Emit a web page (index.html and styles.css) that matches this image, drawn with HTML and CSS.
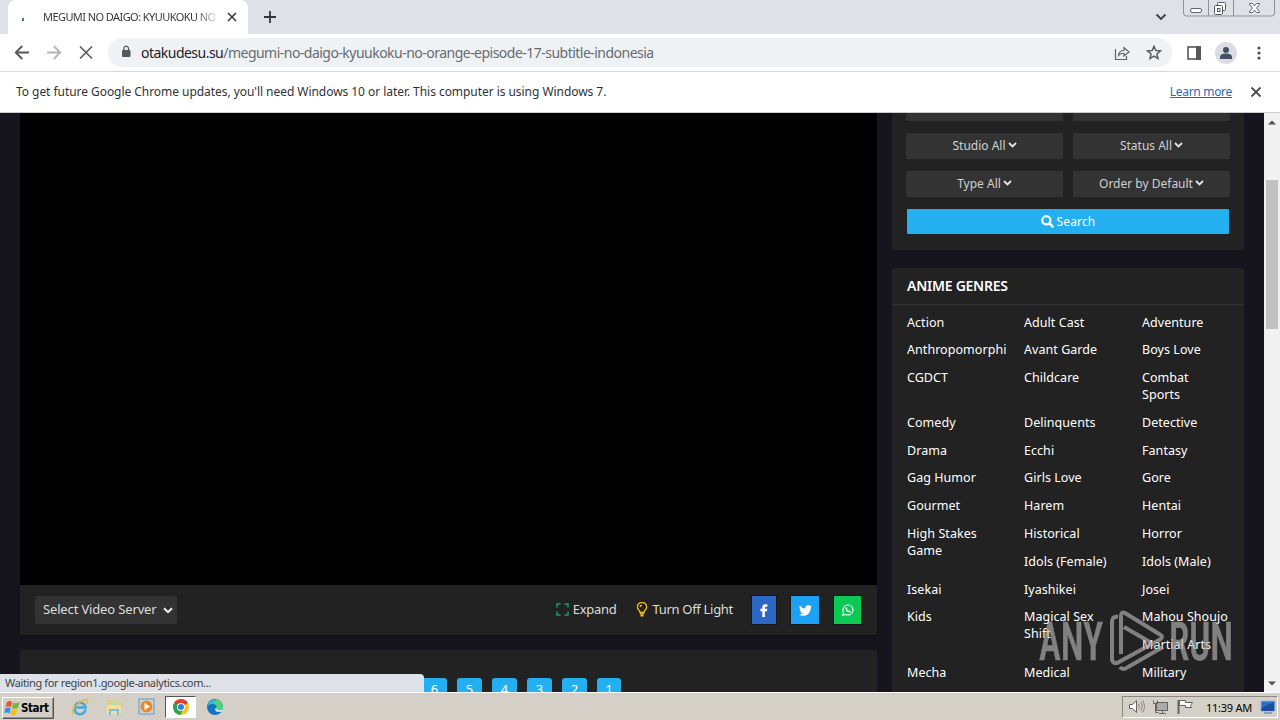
FILE: index.html
```html
<!DOCTYPE html>
<html lang="en">
<head>
<meta charset="utf-8">
<title>MEGUMI NO DAIGO: KYUUKOKU NO ORANGE</title>
<link rel="stylesheet" href="styles.css">
</head>
<body>
<div class="screen">
  <header class="tabstrip">
    <div class="tab">
      <span class="loading-dot"></span>
      <span class="tab-title">MEGUMI NO DAIGO: KYUUKOKU NO</span>
      <svg class="tab-close" width="10" height="10" viewBox="0 0 10 10"><path d="M1 1l8 8M9 1l-8 8" stroke="#3c4043" stroke-width="1.7"/></svg>
    </div>
    <svg class="new-tab" width="14" height="14" viewBox="0 0 14 14"><path d="M7 1v12M1 7h12" stroke="#33363b" stroke-width="1.8"/></svg>
    <svg class="tab-search" width="12" height="8" viewBox="0 0 12 8"><path d="M1.5 1.5L6 6l4.500-4.500" fill="none" stroke="#3c4043" stroke-width="1.9"/></svg>
    <svg class="window-buttons" width="94" height="18" viewBox="0 0 94 18">
      <path d="M1.500 0v13q0 3 3 3h85q3 0 3-3V0M26.500 0v16M51.500 0v16" fill="none" stroke="#8d9299"/>
      <rect x="8.500" y="8.500" width="11" height="4" rx="1.500" fill="#fff" stroke="#62666d"/>
      <rect x="35.500" y="2.500" width="8" height="8" rx="1" fill="#fff" stroke="#555960"/>
      <rect x="32.500" y="5.500" width="8" height="9" rx="1" fill="#fff" stroke="#555960"/>
      <rect x="35.500" y="8.500" width="2.500" height="3" fill="none" stroke="#555960"/>
      <path d="M67.500 3.500h3l2 2.500 2-2.500h3v1L74.500 8l3 3.500v1h-3l-2-2.500-2 2.500h-3v-1l3-3.500-3-3.500z" fill="#fff" stroke="#62666d"/>
    </svg>
  </header>

  <nav class="toolbar">
    <svg class="nav-icons" width="84" height="18" viewBox="0 0 84 18" fill="none" stroke-width="1.9">
      <path d="M15 8.500H2M8.200 2L1.800 8.500l6.400 6.500" stroke="#55585c"/>
      <path d="M33 8.500h13M39.800 2L46.200 8.500l-6.400 6.500" stroke="#b4b6b9"/>
      <path d="M66 2.500l12 12M78 2.500l-12 12" stroke="#5a5d61" stroke-width="1.700"/>
    </svg>
    <div class="omnibox">
      <svg class="lock" width="10" height="13" viewBox="0 0 10 13"><rect x="1" y="5" width="8.500" height="7" rx="1" fill="#55585c"/><path d="M2.900 5V3.500a2.300 2.300 0 014.600 0V5" fill="none" stroke="#55585c" stroke-width="1.300"/></svg>
      <span class="url"><b>otakudesu.su</b>/megumi-no-daigo-kyuukoku-no-orange-episode-17-subtitle-indonesia</span>
      <svg class="share" width="16" height="16" viewBox="0 0 16 16" fill="none" stroke="#5f6368" stroke-width="1.200"><path d="M1.500 4v10.500h11V11"/><path d="M4.500 10.500Q5 5.500 10 5.500V2.500L15 7l-5 4V8.300Q6.500 8 4.500 10.500z"/></svg>
      <svg class="star" width="16" height="16" viewBox="0 0 16 16"><path d="M8 1.200l1.800 4.300 4.700.4-3.600 3.100 1.100 4.600L8 11.100l-4 2.500 1.100-4.600-3.600-3.100 4.700-.4z" fill="none" stroke="#55585c" stroke-width="1.400"/></svg>
    </div>
    <svg class="panel" width="14" height="14" viewBox="0 0 14 14"><rect x="1" y="1" width="12" height="12" fill="none" stroke="#55585c" stroke-width="1.600"/><path d="M9 0h5v14H9z" fill="#55585c"/></svg>
    <svg class="avatar" width="22" height="22" viewBox="0 0 22 22"><circle cx="11" cy="11" r="11" fill="#dadee4"/><circle cx="11" cy="8" r="3" fill="#455068"/><path d="M5 17v-2q0-3.500 6-3.500t6 3.500v2z" fill="#455068"/></svg>
    <svg class="dots" width="4" height="14" viewBox="0 0 4 14" fill="#4c4f54"><circle cx="2" cy="2" r="1.600"/><circle cx="2" cy="7" r="1.600"/><circle cx="2" cy="12" r="1.600"/></svg>
  </nav>

  <div class="infobar">
    <span class="notice">To get future Google Chrome updates, you'll need Windows 10 or later. This computer is using Windows 7.</span>
    <a class="learn">Learn more</a>
    <svg width="12" height="12" viewBox="0 0 12 12"><path d="M1.500 1.500l9 9M10.500 1.500l-9 9" stroke="#4c4f54" stroke-width="1.800"/></svg>
  </div>

  <div class="viewport">
    <div class="page">
      <main class="main">
        <div class="video"></div>
        <div class="controls">
          <div class="server"><span>Select Video Server</span><svg width="10" height="7" viewBox="0 0 10 7"><path d="M1 1.200l4 4 4-4" fill="none" stroke="#eee" stroke-width="2"/></svg></div>
          <div class="expand"><svg width="13" height="13" viewBox="0 0 13 13"><path d="M1 4.500V1h3.500M8.500 1H12v3.500M12 8.500V12H8.500M4.500 12H1V8.500" fill="none" stroke="#16a070" stroke-width="1.500"/></svg><span>Expand</span></div>
          <div class="light"><svg width="12" height="15" viewBox="0 0 12 15" fill="none" stroke="#f2bd22" stroke-width="1.400"><path d="M4 10.500Q4 9 2.500 7.700a4.500 4.500 0 117 0Q8 9 8 10.500z"/><path d="M4 12h4M4.500 13.800h3M4 5q.2-1.700 2-1.800"/></svg><span>Turn Off Light</span></div>
          <div class="social fb"><svg width="8" height="13" viewBox="0 0 8 13"><path d="M2.300 13V7.300H.4V4.800h1.900V3.200Q2.300.3 5.200.3q1.300 0 2.200.2v2.200H6.100q-1.200 0-1.200 1.200v.9h2.400L6.900 7.300h-2V13z" fill="#fff"/></svg></div>
          <div class="social tw"><svg width="13" height="11" viewBox="0 0 24 20"><path d="M24 2.400a10 10 0 01-2.800.8A5 5 0 0023.300.5a10 10 0 01-3.100 1.200 4.900 4.900 0 00-8.400 4.500A14 14 0 011.700 1a4.900 4.900 0 001.500 6.600A5 5 0 011 7v.1A4.900 4.900 0 004.900 12a5 5 0 01-2.200.1 4.900 4.900 0 004.600 3.400A9.900 9.900 0 010 17.500 14 14 0 007.500 19.700c9.100 0 14.300-7.700 14-14.600A10 10 0 0024 2.400z" fill="#fff"/></svg></div>
          <div class="social wa"><svg width="12" height="12" viewBox="0 0 12 12"><path d="M.8 11.200l.8-2.800a5 5 0 112 2z" fill="none" stroke="#fff" stroke-width="1.100"/><path d="M4 3.200l.9.100.5 1.300-.5.700q.6 1.200 1.800 1.700l.7-.7 1.300.6q0 1.600-1.600 1.600Q3.700 7.800 3.400 4.300z" fill="#fff"/></svg></div>
        </div>
        <div class="episodes"><span>6</span><span>5</span><span>4</span><span>3</span><span>2</span><span class="one">1</span></div>
      </main>

      <aside class="sidebar">
        <section class="filters">
          <div class="filter"></div><div class="filter"></div>
          <div class="filter">Studio All<svg width="9" height="6" viewBox="0 0 9 6"><path d="M1 1l3.500 3.500L8 1"/></svg></div>
          <div class="filter">Status All<svg width="9" height="6" viewBox="0 0 9 6"><path d="M1 1l3.500 3.500L8 1"/></svg></div>
          <div class="filter">Type All<svg width="9" height="6" viewBox="0 0 9 6"><path d="M1 1l3.500 3.500L8 1"/></svg></div>
          <div class="filter">Order by Default<svg width="9" height="6" viewBox="0 0 9 6"><path d="M1 1l3.500 3.500L8 1"/></svg></div>
          <div class="search"><svg width="13" height="13" viewBox="0 0 12 12"><circle cx="4.900" cy="4.900" r="3.800" fill="none" stroke="#fff" stroke-width="2"/><path d="M7.800 7.800l3.500 3.500" stroke="#fff" stroke-width="2.200"/></svg>Search</div>
        </section>
        <section class="genres">
          <h3>ANIME GENRES</h3>
          <div class="lists">
            <ul><li>Action</li><li>Anthropomorphi</li><li class="tall">CGDCT</li><li>Comedy</li><li>Drama</li><li>Gag Humor</li><li>Gourmet</li><li class="double">High Stakes<br>Game</li><li>Isekai</li><li class="double">Kids</li><li>Mecha</li></ul>
            <ul><li>Adult Cast</li><li>Avant Garde</li><li class="tall">Childcare</li><li>Delinquents</li><li>Ecchi</li><li>Girls Love</li><li>Harem</li><li>Historical</li><li>Idols (Female)</li><li>Iyashikei</li><li class="double">Magical Sex<br>Shift</li><li>Medical</li></ul>
            <ul><li>Adventure</li><li>Boys Love</li><li class="tall">Combat<br>Sports</li><li>Detective</li><li>Fantasy</li><li>Gore</li><li>Hentai</li><li>Horror</li><li>Idols (Male)</li><li>Josei</li><li>Mahou Shoujo</li><li>Martial Arts</li><li>Military</li></ul>
          </div>
        </section>
      </aside>
    </div>
    <div class="scrollbar">
      <svg width="8" height="5" viewBox="0 0 8 5"><path d="M0 4.500h8L4 .5z" fill="#505050"/></svg>
      <div class="thumb"></div>
      <svg width="8" height="5" viewBox="0 0 8 5"><path d="M0 .5h8L4 4.500z" fill="#505050"/></svg>
    </div>
    <div class="status">Waiting for region1.google-analytics.com...</div>
    <svg class="watermark" width="196" height="66" viewBox="0 0 196 66">
      <g fill="#b5b5b5" stroke="#b5b5b5" stroke-width=".6" font-family="Roboto, sans-serif" font-weight="500" font-size="53">
        <text x="1" y="52" textLength="64" lengthAdjust="spacingAndGlyphs">ANY</text>
        <text x="131" y="52" textLength="64" lengthAdjust="spacingAndGlyphs">RUN</text>
      </g>
      <g fill="none" stroke="#b5b5b5" stroke-width="4" stroke-linejoin="round">
        <path d="M80 8.500q-6 0-6 5v37q0 6 6 4l42-23q4-3 0-5L87 5q-4-2-4 3v38"/>
        <path d="M86 19l31 18M82 59q3 4 8 0l35-20"/>
      </g>
    </svg>
  </div>

  <footer class="taskbar">
    <div class="start"><svg width="16" height="16" viewBox="0 0 16 16"><path d="M3 2q3-2 5 0L7 7.200q-2.500-2-5.500 0z" fill="#e9572b"/><path d="M9 2.500q3 1.500 6.500-.5l-1.500 5.700q-3 1.800-6 .2z" fill="#71b943"/><path d="M1.200 8.400q3-2 5.500 0l-1.200 5.200q-2.500-2-5.500 0z" fill="#3d8fdc"/><path d="M7.700 8.900q3 1.600 6-.2l-1.400 5.400q-3 2-6 .1z" fill="#f6bd25"/></svg><b>Start</b></div>
    <svg class="app ie" width="18" height="18" viewBox="0 0 18 18"><path d="M14.500 11.500A5.500 5.500 0 113.700 9.500h10.800A5.500 5.500 0 004 8" fill="none" stroke="#43a8df" stroke-width="2.500"/><path d="M2 16C-1 12 9 2 16 1.500q2 1-.5 4" fill="none" stroke="#e9b934" stroke-width="1.400"/></svg>
    <svg class="app" width="18" height="18" viewBox="0 0 18 18"><path d="M2 2h6l1 2h7v11H2z" fill="#eac966"/><path d="M4 4h10v6H4z" fill="#b8dcae"/><path d="M2 7h14v9H2z" fill="#f4df94"/><path d="M5 17v-5h8v5" fill="none" stroke="#75bde5" stroke-width="2"/></svg>
    <svg class="app" width="18" height="18" viewBox="0 0 18 18"><rect x="1" y="1" width="15" height="15" fill="#b9d8ee" stroke="#6999bd"/><circle cx="8.500" cy="8.500" r="6" fill="#ef8720"/><path d="M6.500 5l5.500 3.500L6.500 12z" fill="#fff"/></svg>
    <div class="active-app"><svg width="18" height="18" viewBox="0 0 18 18"><circle cx="9" cy="9" r="8" fill="#f9c51b"/><path d="M9 9L2.100 5a8 8 0 0113.800 0z" fill="#e33b2e"/><path d="M9 9L2.100 5a8 8 0 006 12l3.500-6z" fill="#2da44f"/><circle cx="9" cy="9" r="4" fill="#fff"/><circle cx="9" cy="9" r="3" fill="#337ee5"/></svg></div>
    <svg class="app edge" width="18" height="18" viewBox="0 0 18 18"><circle cx="9" cy="9" r="8" fill="#1474c4"/><path d="M1.200 8A8 8 0 0117 9q0 3-3.500 3.200-4 0-3-2.200Q11 6 6 6 3 6 1.200 8z" fill="#36bfca"/><path d="M10 1.100A8 8 0 0117 9q0 3-3.500 3.200-4 0-3-2.200 1-3-2-4z" fill="#56cf79"/><path d="M10.500 9.500q-1 2.600 3 2.700 2 0 3.200-1l-1 2.500h-5q-3-2-.2-4.200z" fill="#e4f4fa"/></svg>
    <div class="tray">
      <svg class="tray-icons" width="68" height="18" viewBox="0 0 68 18" stroke="#67645f" fill="#fff" stroke-width="1">
        <path d="M1.500 6.500h3l4-4v12l-4-4h-3z"/><path d="M10.500 6q2 2.500 0 5M12.500 4q3.500 4.500 0 9M14.500 2.500q4 6 0 12" fill="none" stroke="#88857f"/>
        <rect x="28.500" y="4.500" width="11" height="8" fill="#aaa"/><path d="M31 15.500h7M34.500 13v2"/><path d="M25.500 2.500v3h4v-3M27.500 6v8.500h3" fill="none"/>
        <path d="M50.500 2v14" stroke-width="2"/><path d="M51.500 2.500h6v2h7l-2 3 1 2h-6v-2h-6z"/>
      </svg>
      <span>11:39 AM</span>
      <svg class="desktop" width="16" height="14" viewBox="0 0 16 14"><path d="M1 1h14v10H1z" fill="#2b6fc4" stroke="#9ab4d6"/><path d="M1.500 8L14 2v9H1.500z" fill="#1b4fa0"/><path d="M4 13h8" stroke="#4a6995"/></svg>
    </div>
  </footer>
</div>
</body>
</html>
```
FILE: styles.css
```css
* { box-sizing: border-box; }
body { margin: 0; }
svg { display: block; flex: none; }
.screen { width: 1280px; height: 720px; display: flex; flex-direction: column; overflow: hidden; font-family: "DejaVu Sans Condensed", "DejaVu Sans", sans-serif; font-stretch: condensed; }

.tabstrip { height: 34px; flex: none; background: #dee1e7; display: flex; padding-left: 8px; }
.tab { width: 240px; height: 34px; background: #fff; border-radius: 8px 8px 0 0; display: flex; align-items: center; padding-left: 14px; }
.loading-dot { width: 2px; height: 3px; background: #4a6faf; margin-top: 5px; }
.tab-title { margin: -1px 0 0 19px; width: 172px; font: 11px "Noto Sans", sans-serif; letter-spacing: -.57px; white-space: nowrap; background: linear-gradient(90deg, #333 88%, #ccc); -webkit-background-clip: text; color: transparent; }
.tab-close { margin-left: 12px; }
.new-tab { margin: 10px 0 0 15px; }
.tab-search { margin: 13px 0 0 auto; }
.window-buttons { margin-left: 15px; margin-right: 4px; }

.toolbar { height: 38px; flex: none; background: #fff; border-bottom: 1px solid #d7d9dc; display: flex; align-items: center; padding-left: 14px; }
.omnibox { margin-left: 10px; width: 1064px; height: 29px; border-radius: 15px; background: #eff2f5; display: flex; align-items: center; padding-left: 13px; }
.lock { margin-top: -2px; }
.url { margin-left: 10px; font: 14px "Noto Sans", sans-serif; color: #676b70; white-space: nowrap; letter-spacing: -.52px; }
.url b { font-weight: 400; color: #222428; }
.share { margin-left: auto; }
.star { margin: 0 10px 0 16px; }
.panel { margin-left: 15px; }
.avatar { margin-left: 14px; }
.dots { margin-left: 20px; }

.infobar { height: 41px; flex: none; background: #fff; border-bottom: 1px solid #ccc; display: flex; align-items: center; padding: 0 18px 0 16px; font: 12px "Noto Sans", sans-serif; color: #303236; }
.notice { white-space: nowrap; letter-spacing: -.05px; margin-top: -2px; }
.learn { margin: -2px 18px 0 auto; color: #2b67b8; text-decoration: underline; white-space: nowrap; letter-spacing: -.3px; }

.viewport { height: 579px; flex: none; position: relative; display: flex; overflow: hidden; }
.page { width: 1264px; height: 579px; overflow: hidden; background: #16151d; display: flex; gap: 15px; padding-left: 20px; font-family: "Noto Sans", sans-serif; }
.main { width: 857px; flex: none; }
.video { height: 472px; background: #000; }
.controls { height: 50px; background: #222; display: flex; align-items: center; padding: 0 16px 0 15px; color: #ddd; font-size: 13px; letter-spacing: -.3px; white-space: nowrap; box-shadow: 0 1px 2px #0d0c12; }
.controls span { margin-top: -2px; }
.server { width: 142px; height: 28px; background: #333; border-radius: 3px; display: flex; align-items: center; justify-content: space-between; padding: 0 4px 0 8px; letter-spacing: -.15px; }
.expand { margin-left: auto; display: flex; align-items: center; gap: 4px; }
.light { margin-left: 20px; display: flex; align-items: center; gap: 4px; }
.expand svg, .light svg { margin-top: -2px; }
.social { height: 28px; display: flex; align-items: center; justify-content: center; box-shadow: 0 0 0 1px #171717; }
.fb { width: 24px; margin-left: 19px; background: #2d68c4; }
.tw { width: 28px; margin-left: 15px; background: #1da1f2; }
.wa { width: 27px; margin-left: 15px; background: #0bc954; }
.episodes { height: 60px; margin-top: 15px; border-radius: 3px 3px 0 0; background: #222; display: flex; gap: 10px; padding: 28px 0 0 402px; }
.episodes span { width: 25px; height: 24px; border-radius: 3px; background: #24b0f0; color: #fff; font-size: 13px; line-height: 23px; text-align: center; }
.episodes .one { width: 24px; }

.sidebar { width: 352px; flex: none; }
.filters { height: 137px; background: #222; border-radius: 0 0 3px 3px; display: grid; grid-template-columns: 157px 157px; grid-template-rows: 8px 26px 26px 25px; column-gap: 10px; row-gap: 12px; padding: 0 14px; color: #d0d0d0; font-size: 12px; }
.filter { background: #333; display: flex; align-items: center; justify-content: center; gap: 2px; white-space: nowrap; border-radius: 2px; padding-bottom: 2px; }
.filter svg { fill: none; stroke: #e4e4e4; stroke-width: 1.8; }
.search { grid-column: 1 / 3; margin: 0 1px; background: #24b0f0; color: #fff; display: flex; align-items: center; justify-content: center; gap: 3px; border-radius: 1px; letter-spacing: .15px; }
.genres { height: 430px; margin-top: 18px; background: #222; border-radius: 3px 3px 0 0; }
.genres h3 { margin: 0; height: 37px; padding-left: 15px; border-bottom: 1px solid #333; color: #fff; font-size: 14px; line-height: 36px; font-weight: 600; letter-spacing: -.25px; }
.lists { display: grid; grid-template-columns: 117px 118px 102px; padding: 8.5px 0 0 15px; }
.lists ul { margin: 0; padding: 0; list-style: none; color: #fff; font-size: 12.5px; letter-spacing: .05px; line-height: 17px; white-space: nowrap; }
.lists li { height: 27.8px; }
.lists .tall { height: 44.8px; }
.lists .double { height: 55.6px; }

.scrollbar { width: 16px; flex: none; background: #f1f1f1; display: flex; flex-direction: column; align-items: center; padding: 7px 0 6px; }
.thumb { width: 12px; height: 149px; margin: 55px 0 auto; background: #c1c1c1; }
.status { position: absolute; left: 0; bottom: 0; width: 424px; height: 18px; background: #dee1e7; border-radius: 0 4px 0 0; padding-left: 5px; font: 11px/18px "Noto Sans", sans-serif; letter-spacing: -.36px; color: #404348; }
.watermark { position: absolute; left: 1038px; top: 495px; opacity: .65; }

.taskbar { height: 28px; flex: none; background: #d4cfc7; border-top: 1px solid #fff; display: flex; align-items: center; padding-left: 2px; }
.start { width: 52px; height: 22px; margin-top: 2px; display: flex; align-items: center; gap: 1px; padding-left: 1px; border: 1px solid; border-color: #fff #555 #555 #fff; box-shadow: inset -1px -1px #96928b; font-size: 11.5px; color: #000; }
.start b { letter-spacing: -.4px; }
.app { margin: 1px 0 0 15px; }
.ie { margin-left: 17px; }
.app + .app { margin-left: 15.500px; }
.active-app { width: 31px; height: 22px; margin: 1px 0 0 9px; background: #fff; border: 1px solid; border-color: #555 #fff #fff #555; display: flex; align-items: center; justify-content: center; }
.edge { margin-left: 10px; }
.tray { width: 156px; height: 22px; margin: 1px 2px 0 auto; border: 1px solid; border-color: #8b877f #fff #fff #8b877f; display: flex; align-items: center; padding-left: 5px; }
.tray span { margin-left: 10px; width: 48px; font: 11px "Noto Sans", sans-serif; white-space: nowrap; letter-spacing: -.25px; color: #000; }
.desktop { margin-left: 6px; }
```
